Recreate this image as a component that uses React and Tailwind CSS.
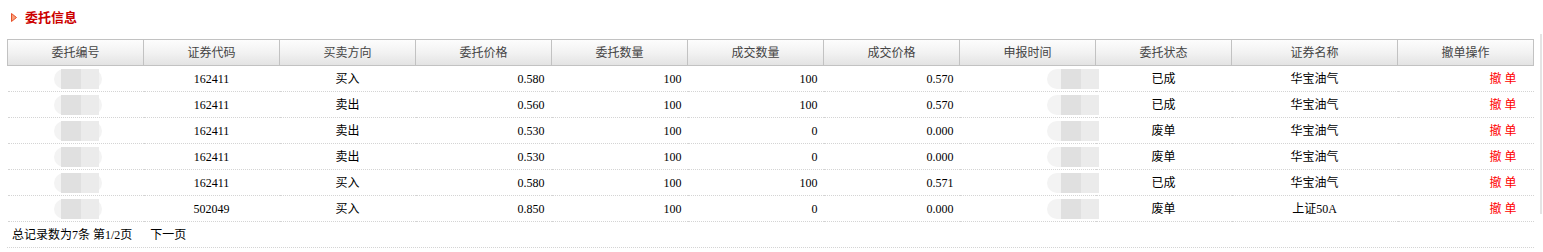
import React from 'react';

const rows = [
  { code: '162411', dir: '买入', price: '0.580', qty: '100', dealQty: '100', dealPrice: '0.570', status: '已成', name: '华宝油气' },
  { code: '162411', dir: '卖出', price: '0.560', qty: '100', dealQty: '100', dealPrice: '0.570', status: '已成', name: '华宝油气' },
  { code: '162411', dir: '卖出', price: '0.530', qty: '100', dealQty: '0', dealPrice: '0.000', status: '废单', name: '华宝油气' },
  { code: '162411', dir: '卖出', price: '0.530', qty: '100', dealQty: '0', dealPrice: '0.000', status: '废单', name: '华宝油气' },
  { code: '162411', dir: '买入', price: '0.580', qty: '100', dealQty: '100', dealPrice: '0.571', status: '已成', name: '华宝油气' },
  { code: '502049', dir: '买入', price: '0.850', qty: '100', dealQty: '0', dealPrice: '0.000', status: '废单', name: '上证50A' },
];

const headers = ['委托编号', '证券代码', '买卖方向', '委托价格', '委托数量', '成交数量', '成交价格', '申报时间', '委托状态', '证券名称', '撤单操作'];
const widths = ['w-[136px]', 'w-[136px]', 'w-[136px]', 'w-[136px]', 'w-[136px]', 'w-[136px]', 'w-[136px]', 'w-[136px]', 'w-[136px]', 'w-[166px]', 'w-[136px]'];

// mosaic blur that hides the order id / time
const Blur = ({ className, inner }) => (
  <div className={`relative h-[20px] w-[48px] rounded-full bg-[#f3f3f3] ${className}`}>
    <div className={`absolute top-0 flex h-[20px] ${inner}`}>
      <div className="w-[20px] bg-[#e0e0e0]" />
      <div className="w-[18px] bg-[#ebebeb]" />
    </div>
  </div>
);

export default function App() {
  return (
    <div className="relative h-[252px] w-[1543px] bg-white font-['Liberation_Serif','Noto_Sans_CJK_SC',serif] text-[12px] text-black">
      <div className="flex h-[35px] items-center gap-[8px] pl-[11px] pb-[1px]">
        <svg width="6" height="9" viewBox="0 0 6 9">
          <path d="M0.5 0.5 L5.5 4.5 L0.5 8.5 Z" fill="#f7a07a" stroke="#e8502a" strokeWidth="1" />
        </svg>
        <span className="text-[13px] font-bold leading-none text-[#cc0000]">委托信息</span>
      </div>

      <div className="ml-[7px] mt-[4px] w-[1527px]">
        <table className="w-[1527px] table-fixed border-collapse">
          <thead>
            <tr className="h-[26px] bg-gradient-to-b from-[#fdfdfd] via-[#f2f2f2] to-[#e2e2e2]">
              {headers.map((h, i) => (
                <th key={h} className={`${widths[i]} border border-[#c2c2c2] p-0 text-center font-normal text-[#444]`}>
                  {h}
                </th>
              ))}
            </tr>
          </thead>
          <tbody>
            {rows.map((r, i) => (
              <tr key={i} className="h-[26px] border-b border-dotted border-[#d4d4d4]">
                <td className="p-0"><Blur className="ml-[46px]" inner="left-[7px]" /></td>
                <td className="p-0 text-center">{r.code}</td>
                <td className="p-0 text-center">{r.dir}</td>
                <td className="p-0 pr-[7px] text-right">{r.price}</td>
                <td className="p-0 pr-[6px] text-right">{r.qty}</td>
                <td className="p-0 pr-[6px] text-right">{r.dealQty}</td>
                <td className="p-0 pr-[6px] text-right">{r.dealPrice}</td>
                <td className="p-0"><Blur className="ml-[87px]" inner="left-[14px]" /></td>
                <td className="p-0 text-center">{r.status}</td>
                <td className="p-0 text-center">{r.name}</td>
                <td className="p-0 pr-[17px] text-right text-[#ff0000]">撤 单</td>
              </tr>
            ))}
          </tbody>
        </table>
        <div className="flex h-[26px] items-center gap-[18px] border-b border-dotted border-[#d4d4d4] pl-[5px]">
          <span>总记录数为7条 第1/2页</span>
          <span>下一页</span>
        </div>
      </div>

      <div className="absolute left-[1540px] top-[34px] h-[180px] w-[2px] bg-[#e4e4e4]" />
    </div>
  );
}
